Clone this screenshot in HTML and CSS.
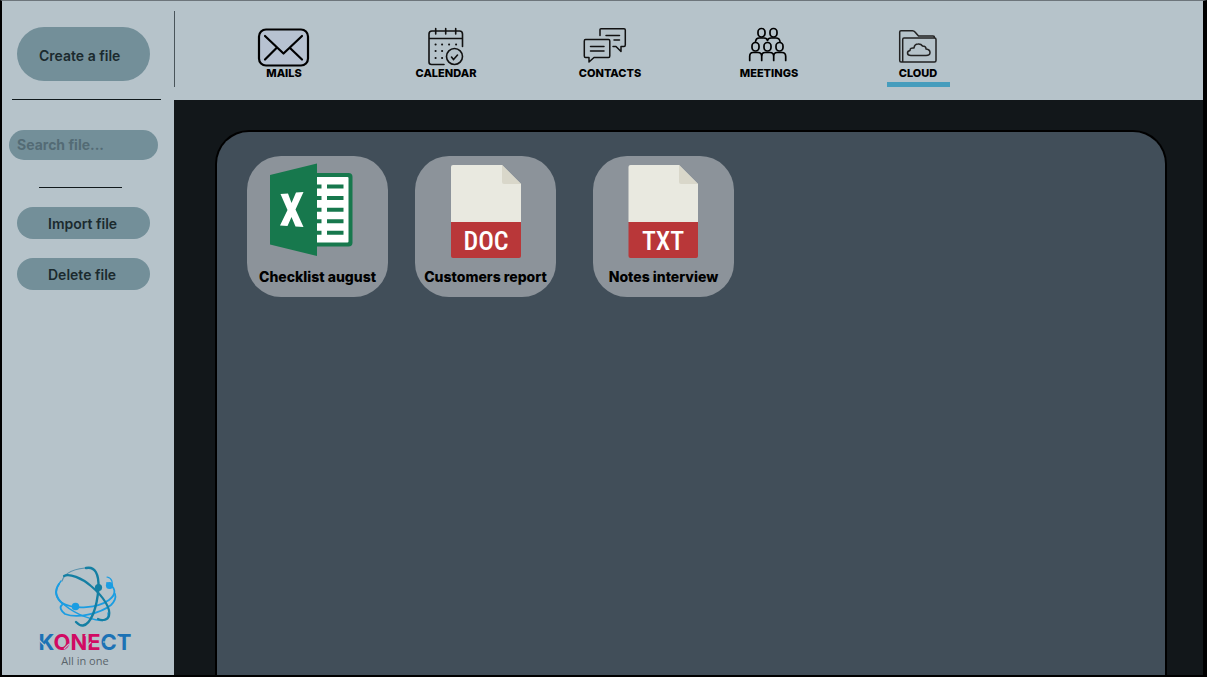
FILE: index.html
```html
<!DOCTYPE html>
<html lang="en">
<head>
<meta charset="utf-8">
<meta name="viewport" content="width=device-width, initial-scale=1">
<title>Konect – Cloud</title>
<link rel="stylesheet" href="styles.css">
</head>
<body>
<div class="app">
  <aside class="sidebar">
    <div class="create-area">
      <button class="pill create" type="button">Create a file</button>
    </div>
    <hr class="rule">
    <input class="search" type="search" placeholder="Search file..." aria-label="Search file">
    <hr class="rule short">
    <div class="actions">
      <button class="pill" type="button">Import file</button>
      <button class="pill" type="button">Delete file</button>
    </div>
    <svg class="logo" viewBox="35 562 100 108" role="img" aria-label="Konect, All in one">
      <g fill="none" stroke-linecap="round">
        <path d="M62 581C65 571 78 568 91 567.500" stroke="#5a91ac" stroke-width="1.200"/>
        <path d="M61 581C55 589 55 596 60 601C71 612 87 619 101 620.500C106 621 109 618 108 613" stroke="#1b9de2" stroke-width="1.400"/>
        <path d="M59 584C54 591 56 598 63 604" stroke="#1b9de2" stroke-width="2"/>
        <path d="M62 603C75 610 98 608 109 600C117 594 116 587 107 583" stroke="#1b9de2" stroke-width="1.800"/>
        <path d="M62 605C59 607 61 611 65 614C78 619 101 613 111 605C115 601 116 597 115 594" stroke="#1b9de2" stroke-width="1.800"/>
        <path d="M107 577C112 578 114 583 110 588" stroke="#1b9de2" stroke-width="1.200"/>
        <path d="M64 576C69 573 82 578 91 586C104 597 111 609 109 616C108 620 102 621 98 619" stroke="#147fa3" stroke-width="2.200"/>
        <path d="M86 568C95 566 99 574 98.500 588C97 608 91 624 83 625.500C80 626 78 624 76 622" stroke="#147fa3" stroke-width="2.400"/>
      </g>
      <circle cx="98.500" cy="587.500" r="3.600" fill="#147fa3"/>
      <circle cx="109.500" cy="585.500" r="3.600" fill="#1b9de2"/>
      <circle cx="75.500" cy="606.500" r="3.800" fill="#1b9de2"/>
      <text class="brand" x="85" y="650" text-anchor="middle"><tspan fill="#1c72b5">K</tspan><tspan fill="#d10a63">ONE</tspan><tspan fill="#1c72b5">CT</tspan></text>
      <g stroke="#b6c3ca" stroke-width="1.200" fill="none">
        <path d="M39 640L44 645M55 636L60 632M64 649L69 644M85 636L88 633M87 646L91 642M103 642H108M118 636L122 640"/>
      </g>
      <text class="tagline" x="85" y="665" text-anchor="middle">All in one</text>
    </svg>
  </aside>

  <header class="topbar">
    <nav class="nav" aria-label="Main">
      <a class="tab" href="#mails">
        <svg viewBox="256 26 56 42" width="56" height="42" fill="none" stroke="#000" stroke-width="2.200" stroke-linecap="round" stroke-linejoin="round" aria-hidden="true">
          <rect x="259" y="29.500" width="49" height="36" rx="7" fill="#b7c2d1"/>
          <path d="M265 36L283.500 53.500L302 36M265 59.500L276.500 48M302 59.500L290 48"/>
        </svg>
        <span>MAILS</span>
      </a>
      <a class="tab" href="#calendar">
        <svg viewBox="418 26 56 42" width="56" height="42" fill="none" stroke="#111" stroke-width="1.600" stroke-linecap="round" aria-hidden="true">
          <path d="M444 64.500H431.500Q429 64.500 429 62V34Q429 31 432 31H459.500Q462.500 31 462.500 34V46.500M429 38.500H462.500M435.700 28.500V34M445.700 28.500V34M455.700 28.500V34"/>
          <circle cx="454.500" cy="56.500" r="8"/>
          <path d="M451.500 57L453.500 59.500L457.500 55"/>
          <path d="M435.500 44.500H435.700M442 44.500H442.200M449 44.500H449.200M456 44.500H456.200M435.500 51H435.700M442 51H442.200M435.500 58H435.700M442 58H442.200" stroke-width="1.900"/>
        </svg>
        <span>CALENDAR</span>
      </a>
      <a class="tab" href="#contacts">
        <svg viewBox="582 26 56 42" width="56" height="42" fill="none" stroke="#111" stroke-width="1.500" stroke-linecap="round" stroke-linejoin="round" aria-hidden="true">
          <path d="M600 35.500V29.500Q600 28.700 601 28.700H624Q625.300 28.700 625.300 30V45Q625.300 46.500 624 46.500H621V51.500L616 46.500H613M606 35.500H619.500M614 40H619.500"/>
          <path d="M585.500 39.500H608.500Q609.800 39.500 609.800 41V56Q609.800 57.500 608.500 57.500H594L589 62V57.500H585.500Q584.300 57.500 584.300 56V41Q584.300 39.500 585.500 39.500ZM590.500 46.500H604M590.500 51H604"/>
        </svg>
        <span>CONTACTS</span>
      </a>
      <a class="tab" href="#meetings">
        <svg viewBox="741 26 56 42" width="56" height="42" fill="none" stroke="#000" stroke-width="1.700" stroke-linecap="round" stroke-linejoin="round" aria-hidden="true">
          <rect x="758" y="28.500" width="7" height="8.500" rx="3.400"/>
          <rect x="770" y="28.500" width="7" height="8.500" rx="3.400"/>
          <path d="M755.500 41.500Q756 38 759 38H764Q767 38 767.500 40.500Q768 38 771 38H776Q779.500 38 780 41.500"/>
          <rect x="752" y="42.500" width="7" height="8.500" rx="3.400"/>
          <rect x="764" y="42.500" width="7" height="8.500" rx="3.400"/>
          <rect x="776" y="42.500" width="7" height="8.500" rx="3.400"/>
          <path d="M749.700 60.500V56.500Q749.700 52.500 753 52.500H758Q761.700 52.500 761.700 56.500V60.500M761.700 56.500Q761.700 52.500 765 52.500H770Q773.700 52.500 773.700 56.500V60.500M773.700 56.500Q773.700 52.500 777 52.500H782Q785.700 52.500 785.700 56.500V60.500"/>
        </svg>
        <span>MEETINGS</span>
      </a>
      <a class="tab active" href="#cloud" aria-current="page">
        <svg viewBox="890 26 56 42" width="56" height="42" fill="none" stroke="#222" stroke-width="1.500" stroke-linejoin="round" aria-hidden="true">
          <path d="M902.500 62H901Q899.700 62 899.700 60.500V32Q899.700 30.700 901 30.700H912.500Q914 30.700 915 32L918.500 36H933Q934.500 36 934.500 37.500V38M902.700 61V39.500Q902.700 38 904 38H934.500Q936 38 936 39.500V60.500Q936 62 934.500 62H902.500Z"/>
          <path d="M911 55.500H926Q930 55.500 930 52.500Q930 49.500 926 49Q926 46 922.500 46Q921 43.700 918 44Q914.500 44 914 48Q910 47.500 910 50.500Q907.500 51 907.500 53Q907.500 55.500 911 55.500Z"/>
        </svg>
        <span>CLOUD</span>
      </a>
    </nav>
  </header>

  <main class="workspace">
    <section class="panel" aria-label="Files">
      <button class="file" type="button">
        <svg viewBox="274 162 88 96" width="88" height="96" overflow="visible" aria-hidden="true">
          <rect x="310" y="173" width="42.500" height="73.500" rx="4" fill="#17784d"/>
          <rect x="312" y="177" width="36.500" height="65.500" rx="1" fill="#fff"/>
          <path d="M316 186.500H321.500M327 186.500H343.500M316 198H321.500M327 198H343.500M316 209.700H321.500M327 209.700H343.500M316 221.300H321.500M327 221.300H343.500M316 232.800H321.500M327 232.800H343.500" stroke="#17784d" stroke-width="4"/>
          <path d="M270 175L317 163.500V256L270 244.500Z" fill="#17784d"/>
          <path d="M280.500 194L288 193.500L291.500 203L296 192.500L303.500 192L295.500 209.500L303.500 227L295.500 226.500L291.500 217L287.500 226L280 225.500L287.500 210Z" fill="#fff"/>
        </svg>
        <span>Checklist august</span>
      </button>
      <button class="file" type="button">
        <svg viewBox="442 162 88 96" width="88" height="96" aria-hidden="true">
          <path d="M451 222V167Q451 165 453 165H502L521 184V222Z" fill="#e9e9e0"/>
          <path d="M502 165L521 184H504Q502 184 502 182Z" fill="#d9d7ca"/>
          <path d="M451 222H521V256Q521 258 519 258H453Q451 258 451 256Z" fill="#b93739"/>
          <text class="ext" x="486" y="250" text-anchor="middle">DOC</text>
        </svg>
        <span>Customers report</span>
      </button>
      <button class="file spaced" type="button">
        <svg viewBox="620 162 88 96" width="88" height="96" aria-hidden="true">
          <path d="M628.500 222V167Q628.500 165 630.500 165H679L698 184V222Z" fill="#e9e9e0"/>
          <path d="M679 165L698 184H681Q679 184 679 182Z" fill="#d9d7ca"/>
          <path d="M628.500 222H698V256Q698 258 696 258H630.500Q628.500 258 628.500 256Z" fill="#b93739"/>
          <text class="ext" x="663" y="250" text-anchor="middle">TXT</text>
        </svg>
        <span>Notes interview</span>
      </button>
    </section>
  </main>
</div>
</body>
</html>
```
FILE: styles.css
```css
* {
  box-sizing: border-box;
}

body {
  margin: 0;
  background: #000;
  font-family: Inter, "Liberation Sans", sans-serif;
}

button,
input {
  font: inherit;
}

.app {
  display: grid;
  grid-template-columns: 172px 1fr;
  grid-template-rows: 99px 1fr;
  min-height: 100vh;
  border: solid #000;
  border-width: 0 4px 2px 2px;
  border-top: 1px solid #6d757b;
}

.sidebar {
  grid-row: 1 / 3;
  display: flex;
  flex-direction: column;
  align-items: center;
  padding: 0 16px 5px 7px;
  background: #b6c3ca;
}

.create-area {
  display: flex;
  align-items: center;
  height: 98px;
  padding-bottom: 8px;
  padding-top: 16px;
}

.pill {
  width: 133px;
  height: 32px;
  padding: 0 0 0 31px;
  border: 0;
  border-radius: 27px;
  background: #738f99;
  color: #1b2a2e;
  font-size: 14px;
  font-weight: 600;
  text-align: left;
}

.create {
  height: 54px;
  padding: 2px 0 0 22px;
}

.rule {
  align-self: stretch;
  height: 1px;
  margin: 0 -3px 0 3px;
  border: 0;
  background: #10191c;
}

.search {
  width: 100%;
  height: 30px;
  margin: 30px 0 27px;
  padding: 0 8px 2px;
  border: 0;
  border-radius: 15px;
  background: #738f99;
  color: #1b2a2e;
  font-size: 14px;
  font-weight: 700;
}

.search::placeholder {
  color: #536b75;
  opacity: 1;
}

.short {
  align-self: center;
  width: 83px;
  margin: 0 6px 0 0;
}

.actions {
  display: grid;
  gap: 19px;
  margin-top: 19px;
}

.logo {
  width: 100px;
  height: 108px;
  margin: auto -3px 0 0;
}

.brand {
  font-size: 22px;
  font-weight: 700;
}

.tagline {
  fill: #59646b;
  font-family: "Open Sans", sans-serif;
  font-size: 11px;
}

.topbar {
  display: flex;
  background: #b6c3ca;
}

.topbar::before {
  content: "";
  width: 1px;
  margin: 10px 0 13px;
  background: #49545a;
}

.nav {
  flex: 1;
  display: grid;
  grid-template-columns: 162fr 162fr 166fr 152fr 146fr 212fr;
  align-items: start;
  padding: 25px 0 0 28px;
}

.tab {
  justify-self: center;
  display: flex;
  flex-direction: column;
  align-items: center;
  height: 61px;
  color: #000;
  font-size: 11px;
  font-weight: 800;
  line-height: 11px;
  text-decoration: none;
}

.tab svg {
  display: block;
}

.active {
  width: 63px;
  border-bottom: 5px solid #469dbd;
}

.workspace {
  display: flex;
  padding: 30px 36px 0 41px;
  background: #12171a;
}

.panel {
  flex: 1;
  display: flex;
  flex-wrap: wrap;
  align-items: flex-start;
  align-content: flex-start;
  gap: 27px;
  padding: 24px 30px;
  border: 2px solid #000;
  border-bottom: 0;
  border-radius: 34px 34px 0 0;
  background: #414e59;
}

.file {
  display: flex;
  flex-direction: column;
  align-items: center;
  width: 141px;
  height: 141px;
  padding: 6px 0 0;
  border: 0;
  border-radius: 34px;
  background: #8c939a;
  color: #000;
  font-size: 14px;
  font-weight: 800;
  line-height: 18px;
  white-space: nowrap;
}

.file span {
  margin-top: 10px;
}

.spaced {
  margin-left: 10px;
}

.ext {
  fill: #fff;
  font-family: "Liberation Sans Narrow", "Roboto Condensed", Roboto, sans-serif;
  font-size: 26px;
  font-weight: 500;
}
```
